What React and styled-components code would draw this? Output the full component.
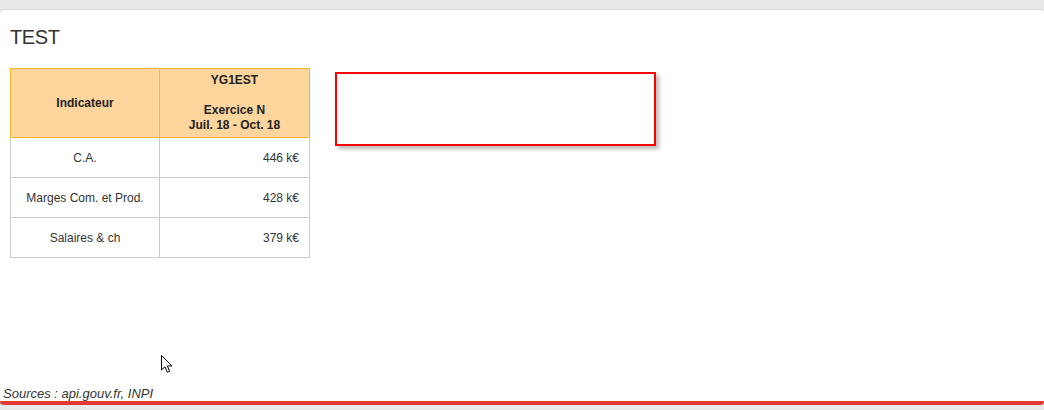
import React from 'react';
import styled, { createGlobalStyle } from 'styled-components';

const GlobalStyle = createGlobalStyle`
  html, body {
    margin: 0;
    padding: 0;
    background: #e8e9eb;
    font-family: "Liberation Sans", Arial, sans-serif;
    color: #333;
  }
`;

// white report card sitting under the grey app bar
const Card = styled.div`
  position: relative;
  box-sizing: border-box;
  margin-top: 9px;
  height: 396px;
  background: #fff;
  border-top: 1px solid #d8d9db;
  border-bottom: 4px solid #e53935;
  border-radius: 4px;
  box-shadow: 0 2px 3px rgba(0, 0, 0, 0.18);
  display: flex;
  flex-direction: column;
  padding-top: 16px;
`;

const Title = styled.h2`
  margin: 0 0 0 10px;
  font-size: 20px;
  line-height: 23px;
  font-weight: 400;
  letter-spacing: -0.4px;
  color: #333;
`;

const Content = styled.div`
  display: flex;
  align-items: flex-start;
  margin-top: 19px;
  padding-left: 10px;
`;

const Table = styled.table`
  width: 299px;
  border-collapse: collapse;
  table-layout: fixed;
  font-size: 12px;
  color: #333;
`;

const Col = styled.col`
  width: ${(p) => p.$w};
`;

const HeadRow = styled.tr`
  height: 69px;
`;

const HeadCell = styled.th`
  background: #ffd59e;
  border: 1px solid #f9b62e;
  padding: 4px 10px;
  font-weight: 700;
  line-height: 15px;
  text-align: center;
  vertical-align: middle;
  color: #222;
`;

const BodyRow = styled.tr`
  height: 40px;
`;

const Cell = styled.td`
  border: 1px solid #cccccc;
  padding: 0 10px;
  text-align: ${(p) => (p.$num ? 'right' : 'center')};
  vertical-align: middle;
  line-height: 14px;
`;

const EmptyBox = styled.div`
  box-sizing: border-box;
  width: 321px;
  height: 74px;
  margin: 4px 0 0 25px;
  border: 2px solid #ff0000;
  box-shadow: 3px 3px 4px rgba(0, 0, 0, 0.28);
`;

const Footer = styled.div`
  margin-top: auto;
  padding-left: 3px;
  font-size: 13px;
  line-height: 15px;
  font-style: italic;
  color: #333;
`;

const Cursor = styled.svg`
  position: absolute;
  left: 160px;
  top: 344px;
`;

const rows = [
  { label: 'C.A.', value: '446 k€' },
  { label: 'Marges Com. et Prod.', value: '428 k€' },
  { label: 'Salaires & ch', value: '379 k€' },
];

export default function App() {
  return (
    <>
      <GlobalStyle />
      <Card>
        <Title>TEST</Title>
        <Content>
          <Table>
            <colgroup>
              <Col $w="149px" />
              <Col $w="150px" />
            </colgroup>
            <thead>
              <HeadRow>
                <HeadCell>Indicateur</HeadCell>
                <HeadCell>
                  YG1EST
                  <br />
                  <br />
                  Exercice N
                  <br />
                  Juil. 18 - Oct. 18
                </HeadCell>
              </HeadRow>
            </thead>
            <tbody>
              {rows.map((r) => (
                <BodyRow key={r.label}>
                  <Cell>{r.label}</Cell>
                  <Cell $num>{r.value}</Cell>
                </BodyRow>
              ))}
            </tbody>
          </Table>
          <EmptyBox />
        </Content>
        <Footer>Sources : api.gouv.fr, INPI</Footer>
        <Cursor width="14" height="20" viewBox="0 0 14 20">
          <path
            d="M1.5 1.5 L1.5 16 L5 12.8 L7.4 18.3 L9.6 17.3 L7.3 11.9 L12 11.9 Z"
            fill="#fff"
            stroke="#000"
            strokeWidth="1"
            strokeLinejoin="miter"
          />
        </Cursor>
      </Card>
    </>
  );
}
